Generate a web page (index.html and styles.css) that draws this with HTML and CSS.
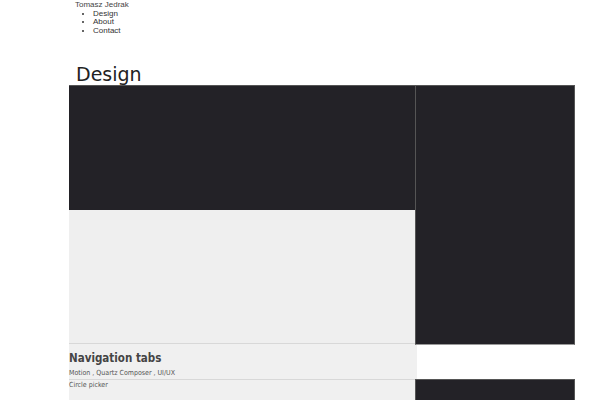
FILE: index.html
```
<!DOCTYPE html>
<html>
<head>
<meta charset="utf-8">
<link rel="stylesheet" href="styles.css">
</head>
<body>
<header class="top">
  <div class="name">Tomasz Jedrak</div>
  <ul class="nav">
    <li>Design</li>
    <li>About</li>
    <li>Contact</li>
  </ul>
</header>
<h1 class="title">Design</h1>
<main class="grid">
  <div class="col-left">
    <div class="card">
      <div class="shot"></div>
      <div class="panel"></div>
      <div class="caption">
        <div class="cap-title">Navigation tabs</div>
        <div class="cap-tags">Motion , Quartz Composer , UI/UX</div>
      </div>
    </div>
    <div class="card next">
      <div class="cap-tags">Circle picker</div>
    </div>
  </div>
  <div class="col-right">
    <div class="tile tall"></div>
    <div class="gap"></div>
    <div class="tile"></div>
  </div>
</main>
</body>
</html>
```
FILE: styles.css
```
html, body { margin: 0; padding: 0; background: #fff; overflow: hidden; height: 400px; }
body { font-family: "Liberation Sans", Arial, sans-serif; color: #333; }
.top { padding-left: 75px; padding-top: 1px; font-size: 8px; line-height: 8.5px; }
.name { color: #444; }
.nav { margin: 0; padding-left: 18px; color: #333; }
.title {
  margin: 28px 0 0 76px;
  font-family: "DejaVu Sans", Verdana, sans-serif;
  font-weight: normal;
  font-size: 19px;
  line-height: 22px;
  height: 22px;
  color: #222;
}
.grid { display: grid; grid-template-columns: 346px 160px; margin-left: 69px; }
.col-left { display: flex; flex-direction: column; }
.shot { height: 124px; background: #232227; border-top: 1px solid #555; }
.panel { height: 134px; background: #efefef; width: 348px; border-bottom: 1px solid #d8d8d8; box-sizing: border-box; }
.caption { background: #f0f0f0; width: 348px; padding: 8px 0 3px; height: 36px; box-sizing: border-box; border-bottom: 1px solid #d8d8d8; }
.cap-title { font-family: "DejaVu Sans Condensed", "DejaVu Sans", sans-serif; font-stretch: condensed; font-weight: bold; font-size: 11.5px; line-height: 13px; color: #444; }
.cap-tags { font-family: "DejaVu Sans Condensed", "DejaVu Sans", sans-serif; font-stretch: condensed; font-size: 7px; line-height: 9px; color: #555; margin-top: 4px; }
.next { background: #f0f0f0; width: 348px; height: 30px; }
.next .cap-tags { margin-top: 1px; }
.col-right { display: flex; flex-direction: column; padding-left: 0; }
.tile { background: #232227; border: 1px solid #555; border-bottom-color: #999; height: 60px; margin-left: 0; }
.tile.tall { height: 258px; }
.gap { height: 34px; }
```
